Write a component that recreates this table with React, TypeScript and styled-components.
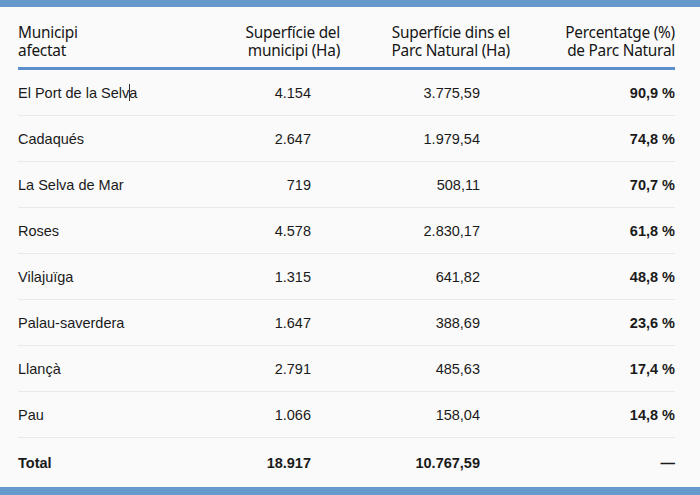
import React from 'react';
import styled, { createGlobalStyle } from 'styled-components';

const GlobalStyle = createGlobalStyle`
	html, body {
		margin: 0;
		padding: 0;
		background: #fafafa;
	}
`;

const Page = styled.div`
	width: 700px;
	height: 495px;
	display: flex;
	flex-direction: column;
	background: #fafafa;
	overflow: hidden;
`;

const Bar = styled.div<{ $h: number }>`
	height: ${(p) => p.$h}px;
	flex-shrink: 0;
	background: #6699cc;
`;

const Body = styled.div`
	flex: 1;
	padding: 17px 25px 0 18px;
`;

const Grid = styled.div`
	display: grid;
	grid-template-columns: 180px 142px 170px 165px;
`;

const HeadCell = styled.div<{ $right?: boolean }>`
	font-family: 'Noto Sans', 'Open Sans', sans-serif;
	font-size: 15.4px;
	line-height: 18px;
	color: #151515;
	text-align: ${(p) => (p.$right ? 'right' : 'left')};
	padding-bottom: 7px;
	border-bottom: 3px solid #5b8fcc;
	white-space: nowrap;
	letter-spacing: -0.25px;
`;

const Cell = styled.div<{ $right?: boolean; $pad?: number; $bold?: boolean; $total?: boolean }>`
	font-family: 'Liberation Sans', Arial, sans-serif;
	font-size: 14.5px;
	color: #1a1a1a;
	font-weight: ${(p) => (p.$bold ? 700 : 400)};
	height: ${(p) => (p.$total ? 49 : 45)}px;
	display: flex;
	align-items: center;
	justify-content: ${(p) => (p.$right ? 'flex-end' : 'flex-start')};
	padding-right: ${(p) => p.$pad ?? 0}px;
	border-bottom: ${(p) => (p.$total ? 'none' : '1px solid #e9e9e9')};
	white-space: nowrap;
`;

const Caret = styled.span`
	display: inline-block;
	width: 1px;
	height: 17px;
	background: #333;
	vertical-align: -4px;
	margin: 0 -0.5px;
`;

const rows: [string, string, string, string][] = [
	['El Port de la Selva', '4.154', '3.775,59', '90,9 %'],
	['Cadaqués', '2.647', '1.979,54', '74,8 %'],
	['La Selva de Mar', '719', '508,11', '70,7 %'],
	['Roses', '4.578', '2.830,17', '61,8 %'],
	['Vilajuïga', '1.315', '641,82', '48,8 %'],
	['Palau-saverdera', '1.647', '388,69', '23,6 %'],
	['Llançà', '2.791', '485,63', '17,4 %'],
	['Pau', '1.066', '158,04', '14,8 %'],
];

export default function App() {
	return (
		<>
			<GlobalStyle />
			<Page>
				<Bar $h={7} />
				<Body>
					<Grid>
						<HeadCell>Municipi<br />afectat</HeadCell>
						<HeadCell $right>Superfície del<br />municipi (Ha)</HeadCell>
						<HeadCell $right>Superfície dins el<br />Parc Natural (Ha)</HeadCell>
						<HeadCell $right>Percentatge (%)<br />de Parc Natural</HeadCell>
						{rows.map((r, i) => (
							<React.Fragment key={r[0]}>
								<Cell>
									{i === 0 ? (
										<>El Port de la Selv<Caret />a</>
									) : (
										r[0]
									)}
								</Cell>
								<Cell $right $pad={29}>{r[1]}</Cell>
								<Cell $right $pad={30}>{r[2]}</Cell>
								<Cell $right $bold>{r[3]}</Cell>
							</React.Fragment>
						))}
						<Cell $bold $total>Total</Cell>
						<Cell $right $pad={29} $bold $total>18.917</Cell>
						<Cell $right $pad={30} $bold $total>10.767,59</Cell>
						<Cell $right $bold $total>—</Cell>
					</Grid>
				</Body>
				<Bar $h={8} />
			</Page>
		</>
	);
}
